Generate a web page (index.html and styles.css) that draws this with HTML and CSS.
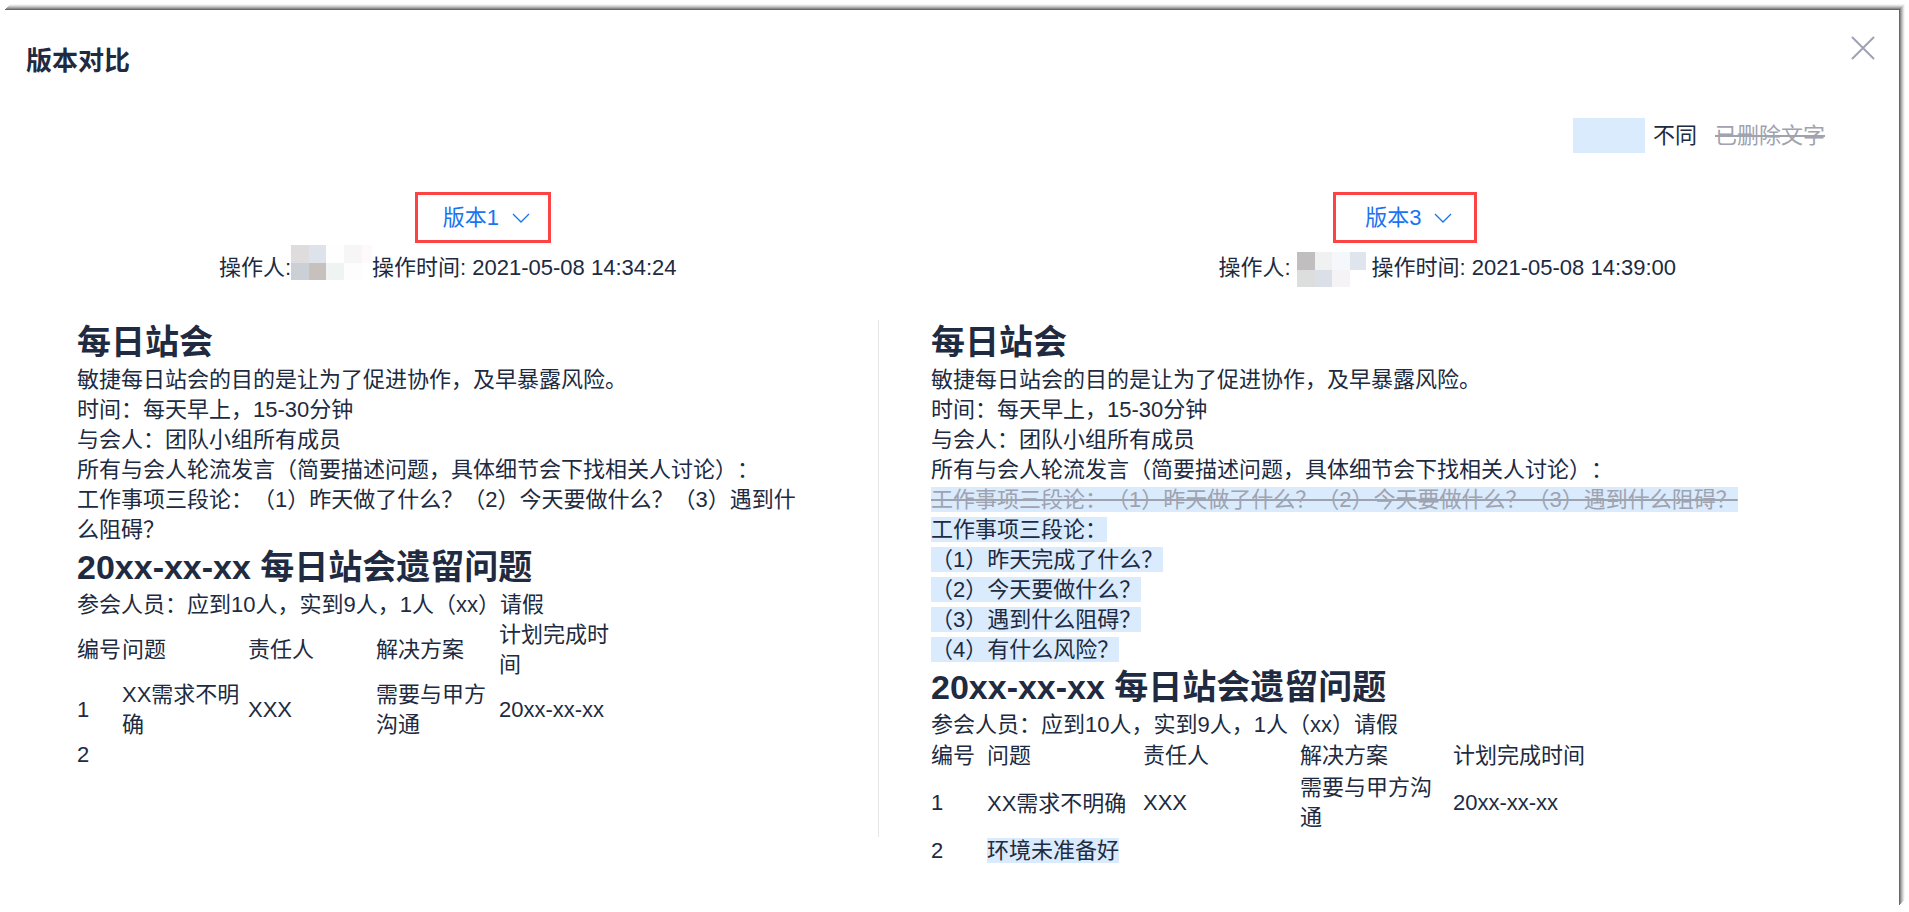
FILE: index.html
```html
<!DOCTYPE html>
<html lang="zh-CN">
<head>
<meta charset="utf-8">
<title>版本对比</title>
<meta name="viewport" content="width=device-width, initial-scale=1">
<link rel="stylesheet" href="styles.css">
</head>
<body>
<main class="dialog">
  <header class="dialog-head">
    <h1 class="dialog-title">版本对比</h1>
    <button class="close" type="button" aria-label="关闭">
      <svg width="24" height="24" viewBox="0 0 24 24" fill="none" stroke="#9ea3b4" stroke-width="2" stroke-linecap="round"><path d="M1.5 1.5 22.5 22.5M22.5 1.5 1.5 22.5"/></svg>
    </button>
  </header>

  <div class="legend">
    <span class="legend-swatch"></span>
    <span class="legend-diff">不同</span>
    <del class="removed">已删除文字</del>
  </div>

  <section class="versions">
    <div class="version">
      <div class="picker picker-old">
        <select class="picker-select" aria-label="左侧版本">
          <option selected>版本1</option>
          <option>版本3</option>
        </select>
        <svg class="picker-arrow" width="18" height="10" viewBox="0 0 18 10" fill="none" stroke="#1a73f0" stroke-width="1.3"><path d="M1 1 9 9 17 1"/></svg>
      </div>
      <p class="meta">
        <span>操作人:</span>
        <svg width="81" height="46" viewBox="0 0 81 46" shape-rendering="crispEdges" aria-hidden="true">
          <path fill="#dfdcde" d="M0 0h18v18H0z"/><path fill="#dde2eb" d="M18 0h17v18H18z"/><path fill="#fdfefd" d="M35 0h18v18H35z"/><path fill="#f6f6f7" d="M53 0h18v18H53z"/><path fill="#fefafa" d="M71 0h10v18H71z"/>
          <path fill="#cad0d5" d="M0 18h18v17H0z"/><path fill="#c7c1bd" d="M18 18h17v17H18z"/><path fill="#eff4f2" d="M35 18h18v17H35z"/><path fill="#fdfdfd" d="M53 18h18v17H53z"/>
        </svg>
        <span>操作时间: 2021-05-08 14:34:24</span>
      </p>
    </div>
    <div class="version">
      <div class="picker picker-new">
        <select class="picker-select" aria-label="右侧版本">
          <option>版本1</option>
          <option selected>版本3</option>
        </select>
        <svg class="picker-arrow" width="18" height="10" viewBox="0 0 18 10" fill="none" stroke="#1a73f0" stroke-width="1.3"><path d="M1 1 9 9 17 1"/></svg>
      </div>
      <p class="meta">
        <span>操作人:</span>
        <svg width="81" height="46" viewBox="0 0 81 46" shape-rendering="crispEdges" aria-hidden="true">
          <path fill="#c0bebf" d="M6 7h18v18H6z"/><path fill="#eff2f1" d="M24 7h17v18H24z"/><path fill="#f4f8fb" d="M41 7h18v18H41z"/><path fill="#dee5ed" d="M59 7h16v18H59z"/>
          <path fill="#dbdedd" d="M6 25h18v17H6z"/><path fill="#dbdfe8" d="M24 25h17v17H24z"/><path fill="#f5f3f6" d="M41 25h18v17H41z"/>
        </svg>
        <span>操作时间: 2021-05-08 14:39:00</span>
      </p>
    </div>
  </section>

  <section class="compare">
    <article class="doc doc-old">
      <h2>每日站会</h2>
      <p>敏捷每日站会的目的是让为了促进协作，及早暴露风险。</p>
      <p>时间：每天早上，15-30分钟</p>
      <p>与会人：团队小组所有成员</p>
      <p>所有与会人轮流发言（简要描述问题，具体细节会下找相关人讨论）：</p>
      <p>工作事项三段论：（1）昨天做了什么？（2）今天要做什么？（3）遇到什么阻碍？</p>
      <h2>20xx-xx-xx 每日站会遗留问题</h2>
      <p>参会人员：应到10人，实到9人，1人（xx）请假</p>
      <table class="issues issues-old">
        <colgroup><col class="c-no"><col class="c-issue"><col class="c-owner"><col class="c-fix"><col class="c-date"></colgroup>
        <tr><td>编号</td><td>问题</td><td>责任人</td><td>解决方案</td><td>计划完成时间</td></tr>
        <tr><td>1</td><td>XX需求不明确</td><td>XXX</td><td>需要与甲方沟通</td><td>20xx-xx-xx</td></tr>
        <tr><td>2</td><td></td><td></td><td></td><td></td></tr>
      </table>
    </article>
    <article class="doc doc-new">
      <h2>每日站会</h2>
      <p>敏捷每日站会的目的是让为了促进协作，及早暴露风险。</p>
      <p>时间：每天早上，15-30分钟</p>
      <p>与会人：团队小组所有成员</p>
      <p>所有与会人轮流发言（简要描述问题，具体细节会下找相关人讨论）：</p>
      <p><del class="removed diff">工作事项三段论：（1）昨天做了什么？（2）今天要做什么？（3）遇到什么阻碍？</del></p>
      <p><ins class="diff">工作事项三段论：</ins></p>
      <p><ins class="diff">（1）昨天完成了什么？</ins></p>
      <p><ins class="diff">（2）今天要做什么？</ins></p>
      <p><ins class="diff">（3）遇到什么阻碍？</ins></p>
      <p><ins class="diff">（4）有什么风险？</ins></p>
      <h2>20xx-xx-xx 每日站会遗留问题</h2>
      <p>参会人员：应到10人，实到9人，1人（xx）请假</p>
      <table class="issues issues-new">
        <colgroup><col class="c-no"><col class="c-issue"><col class="c-owner"><col class="c-fix"><col class="c-date"></colgroup>
        <tr><td>编号</td><td>问题</td><td>责任人</td><td>解决方案</td><td>计划完成时间</td></tr>
        <tr><td>1</td><td class="edited">XX需求不明确</td><td>XXX</td><td>需要与甲方沟通</td><td>20xx-xx-xx</td></tr>
        <tr><td>2</td><td class="edited"><ins class="diff">环境未准备好</ins></td><td></td><td></td><td></td></tr>
      </table>
    </article>
  </section>
</main>
</body>
</html>
```
FILE: styles.css
```css
* { box-sizing: border-box; }

body {
  margin: 0;
  background: #fff;
  color: #202a40;
  font: 22px/30px "Liberation Sans", "Noto Sans CJK SC", sans-serif;
  text-spacing-trim: space-all;
}

h1, h2, p { margin: 0; }

.dialog {
  min-height: calc(100vh - 16px);
  margin: 10px 10px 6px 4px;
  background: #fff;
  box-shadow:
    1px -1px 0 #686868,
    2px -2px 0 #8c8c8c,
    3px -3px 0 #acacac,
    4px -4px 0 #cacaca,
    5px -5px 0 #e2e2e2,
    6px -6px 0 #f6f6f6;
}

.dialog-head {
  display: flex;
  justify-content: space-between;
  align-items: flex-start;
  padding: 26px 24px 0 22px;
}

.dialog-title {
  padding-top: 7px;
  font-size: 26px;
  line-height: 36px;
}

.close {
  padding: 0;
  border: 0;
  background: none;
  cursor: pointer;
}

.close svg { display: block; }

.legend {
  display: flex;
  align-items: center;
  justify-content: flex-end;
  margin-top: 39px;
  padding-right: 74px;
}

.legend-swatch {
  width: 72px;
  height: 35px;
  background: #daebfe;
}

.legend-diff { margin: 0 18px 0 8px; }

.removed {
  color: #9fa3af;
  text-decoration: line-through 2px;
}

.diff { background: #daebfe; }

ins { text-decoration: none; }

.versions {
  display: grid;
  grid-template-columns: 1fr 1fr;
  column-gap: 152px;
  margin-top: 39px;
  padding: 0 28px 0 20px;
}

.picker {
  display: flex;
  align-items: center;
  gap: 12px;
  width: fit-content;
  height: 51px;
  border: 3px solid #fc4444;
}

.picker-old {
  margin-left: calc(50% - 33px);
  padding: 0 18px 0 25px;
}

.picker-new {
  margin-left: calc(50% - 114px);
  padding: 0 22px 0 29px;
}

.picker-select {
  appearance: none;
  padding: 0;
  border: 0;
  background: none;
  color: #1a73f0;
  font: inherit;
  cursor: pointer;
}

.meta {
  display: flex;
  align-items: center;
  justify-content: center;
  margin-top: 2px;
  white-space: nowrap;
}

.compare {
  display: grid;
  grid-template-columns: 802fr 968fr;
  margin-top: 29px;
  padding: 0 52px 0 73px;
}

.doc h2 {
  font-size: 34px;
  line-height: 45px;
}

.doc-old {
  align-self: start;
  padding: 0 70px 67px 0;
  border-right: 1px solid #e6e6e8;
}

.doc-new { padding-left: 52px; }

.issues {
  table-layout: fixed;
  border-collapse: collapse;
}

.issues td {
  padding: 0;
  vertical-align: middle;
}

.issues-old { width: 545px; }
.issues-old .c-no { width: 45px; }
.issues-old .c-issue { width: 126px; }
.issues-old .c-owner { width: 128px; }
.issues-old .c-fix { width: 123px; }

.issues-new { width: 675px; }
.issues-new .c-no { width: 56px; }
.issues-new .c-issue { width: 156px; }
.issues-new .c-owner { width: 157px; }
.issues-new .c-fix { width: 153px; }
.issues-new td { padding: 1px 0; }
.issues-new .edited { padding-top: 2px; }
```
